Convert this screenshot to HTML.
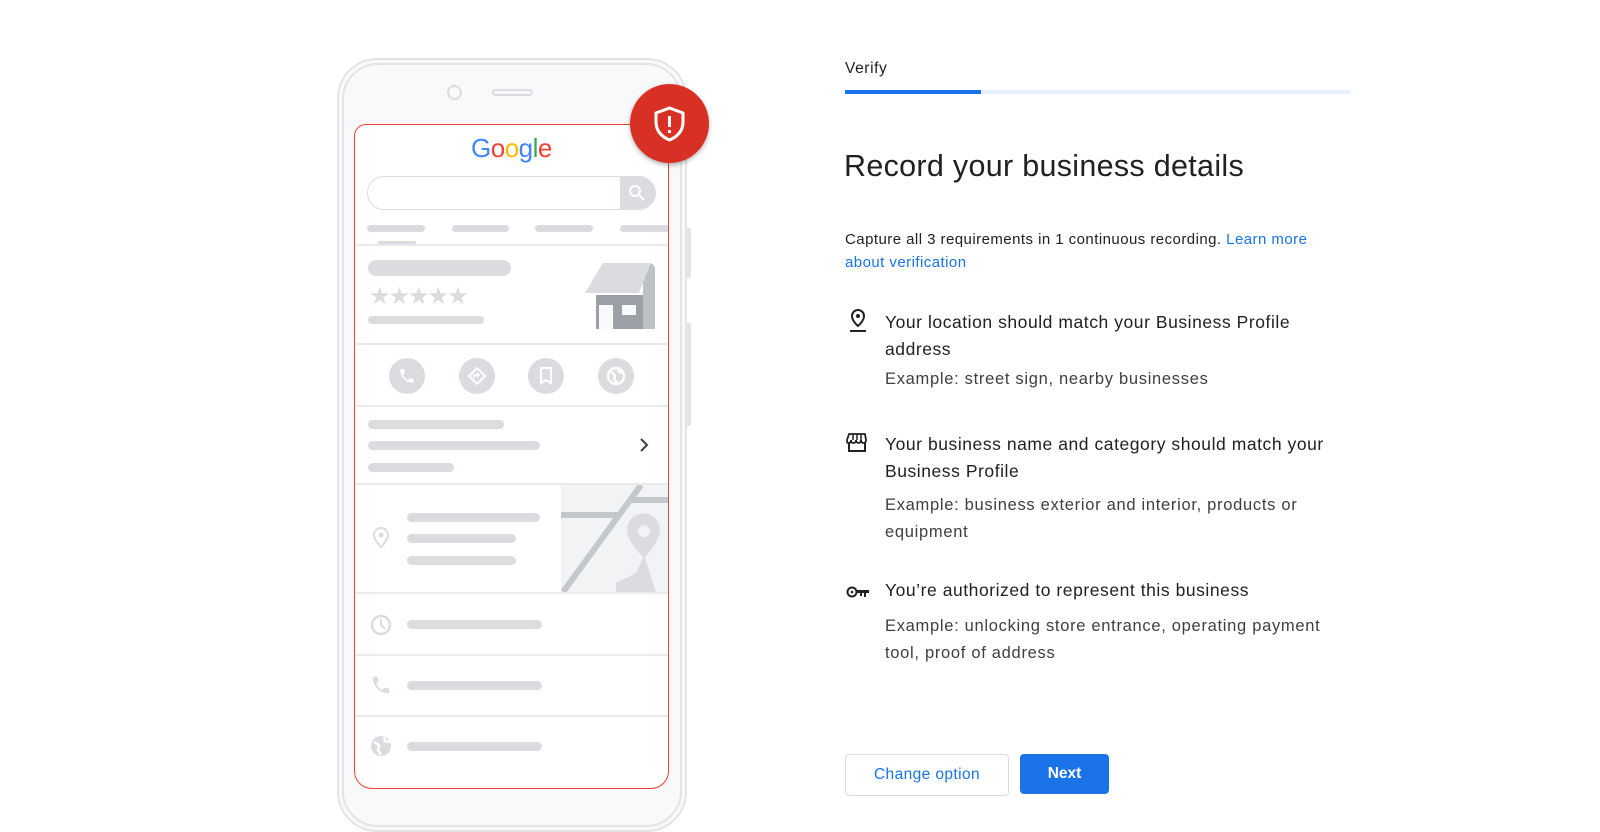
<!DOCTYPE html>
<html><head><meta charset="utf-8"><style>
body{margin:0;width:1600px;height:816px;background:#fff;font-family:"Liberation Sans",Roboto,sans-serif;position:relative;overflow:hidden;color:#202124}
.a{position:absolute}
.bar{position:absolute;background:#dadce0;border-radius:5px;height:9px}
.hr{position:absolute;left:356px;width:312px;height:2px;background:#e8eaed}
.t{position:absolute;font-size:17.5px;color:#202124;letter-spacing:.55px}
.s{position:absolute;font-size:16.5px;color:#3c4043;letter-spacing:.7px}
.ic{position:absolute;width:36px;height:36px;border-radius:50%;background:#dadce0}
</style></head><body>
<!-- phone -->
<div class="a" style="left:337px;top:58px;width:346px;height:770px;border:2px solid #e3e4e6;border-radius:40px;background:#f8f9fa"></div>
<div class="a" style="left:342px;top:63px;width:336px;height:760px;border:2px solid #e3e4e6;border-radius:36px;background:#f8f9fa"></div>
<div class="a" style="left:686px;top:228px;width:5px;height:50px;background:#e3e4e6;border-radius:2px"></div>
<div class="a" style="left:686px;top:323px;width:5px;height:103px;background:#e3e4e6;border-radius:2px"></div>
<div class="a" style="left:447px;top:85px;width:11px;height:11px;border:2px solid #dadce0;border-radius:50%"></div>
<div class="a" style="left:492px;top:89px;width:37px;height:3px;border:2px solid #dadce0;border-radius:4px"></div>
<div class="a" style="left:354px;top:124px;width:313px;height:663px;border:1.5px solid #ea4335;border-radius:12px 0 18px 18px;background:#fff;overflow:hidden">
</div>
<div class="a" style="left:471px;top:133px;font-size:26px;letter-spacing:-0.5px;font-family:'Liberation Sans',sans-serif"><span style="color:#4285f4">G</span><span style="color:#ea4335">o</span><span style="color:#fbbc05">o</span><span style="color:#4285f4">g</span><span style="color:#34a853">l</span><span style="color:#ea4335">e</span></div>
<div class="a" style="left:367px;top:176px;width:287px;height:32px;border:1.5px solid #dadce0;border-radius:18px;overflow:hidden"><div class="a" style="right:0;top:0;width:35px;height:32px;background:#dadce0"></div>
<svg class="a" style="right:9px;top:7px" width="18" height="18" viewBox="0 0 18 18"><circle cx="7" cy="7" r="5" fill="none" stroke="#fff" stroke-width="2"/><path d="M11 11l5 5" stroke="#fff" stroke-width="2"/></svg></div>
<div class="bar" style="left:367px;top:225px;width:58px;height:7px"></div>
<div class="bar" style="left:452px;top:225px;width:57px;height:7px"></div>
<div class="bar" style="left:535px;top:225px;width:58px;height:7px"></div>
<div class="bar" style="left:620px;top:225px;width:48px;height:7px;border-radius:5px 0 0 5px"></div>
<div class="bar" style="left:378px;top:241px;width:38px;height:3px"></div>
<div class="hr" style="top:244px"></div>
<div class="bar" style="left:368px;top:260px;width:143px;height:16px;border-radius:8px"></div>
<div class="a" style="left:369px;top:282px;font-size:24px;color:#dadce0;letter-spacing:-2px">★★★★★</div>
<div class="bar" style="left:368px;top:316px;width:116px;height:8px"></div>
<svg class="a" style="left:585px;top:263px" width="70" height="66" viewBox="0 0 70 66"><path d="M18 0h46a6 6 0 0 1 6 6v60H58V8z" fill="#bdc1c6"/><path d="M18 0h48l-12 30H0z" fill="#dadce0"/><rect x="11" y="32" width="47" height="34" fill="#9aa0a6"/><rect x="14" y="42" width="14" height="24" fill="#f8f9fa"/><rect x="37" y="42" width="14" height="10" fill="#f8f9fa"/></svg>
<div class="hr" style="top:343px"></div>
<div class="ic" style="left:389px;top:358px"></div><div class="ic" style="left:459px;top:358px"></div><div class="ic" style="left:528px;top:358px"></div><div class="ic" style="left:598px;top:358px"></div>
<svg class="a" style="left:398px;top:367px" width="18" height="18" viewBox="0 0 24 24"><path fill="#fff" d="M6.6 10.8c1.4 2.8 3.8 5.1 6.6 6.6l2.2-2.2c.3-.3.7-.4 1-.2 1.1.4 2.3.6 3.6.6.6 0 1 .4 1 1V20c0 .6-.4 1-1 1C10.6 21 3 13.4 3 4c0-.6.4-1 1-1h3.5c.6 0 1 .4 1 1 0 1.3.2 2.5.6 3.6.1.3 0 .7-.2 1z"/></svg>
<svg class="a" style="left:467px;top:366px" width="20" height="20" viewBox="0 0 20 20"><path d="M10 2l8 8-8 8-8-8z" fill="none" stroke="#fff" stroke-width="2"/><path d="M7 12V9h5M10 7l2 2-2 2" fill="none" stroke="#fff" stroke-width="1.6"/></svg>
<svg class="a" style="left:539px;top:367px" width="14" height="18" viewBox="0 0 14 18"><path d="M2 1h10v15l-5-3-5 3z" fill="none" stroke="#fff" stroke-width="2"/></svg>
<svg class="a" style="left:606px;top:366px" width="20" height="20" viewBox="0 0 20 20"><circle cx="10" cy="10" r="8" fill="none" stroke="#fff" stroke-width="2.5"/><path d="M5 6l4 3-1 4 3 4M12 3l1 3 4 1" fill="none" stroke="#fff" stroke-width="2.5"/></svg>
<div class="hr" style="top:405px"></div>
<div class="bar" style="left:368px;top:420px;width:136px"></div>
<div class="bar" style="left:368px;top:441px;width:172px"></div>
<div class="bar" style="left:368px;top:463px;width:86px"></div>
<svg class="a" style="left:638px;top:437px" width="12" height="16" viewBox="0 0 12 16"><path d="M3 2l6 6-6 6" fill="none" stroke="#3c4043" stroke-width="2"/></svg>
<div class="hr" style="top:483px"></div>
<div class="a" style="left:561px;top:485px;width:107px;height:107px;background:#f1f3f4;overflow:hidden">
<svg width="107" height="107" viewBox="0 0 107 107"><path d="M0 30h60M70 15h40" stroke="#c4c7cb" stroke-width="6"/><path d="M80 0L2 107" stroke="#c4c7cb" stroke-width="6"/><path d="M66 45a16 16 0 0 1 33 0c0 12-16 28-16 28s-17-16-17-28z" fill="#dadce0"/><circle cx="83" cy="46" r="6" fill="#f1f3f4"/><path d="M83 70l-8 18-20 10 0 9h40z" fill="#dadce0"/></svg></div>
<svg class="a" style="left:372px;top:527px" width="18" height="22" viewBox="0 0 18 22"><path d="M9 20s-7-7-7-12a7 7 0 0 1 14 0c0 5-7 12-7 12z" fill="none" stroke="#dadce0" stroke-width="2"/><circle cx="9" cy="8" r="2.5" fill="#dadce0"/></svg>
<div class="bar" style="left:407px;top:513px;width:133px"></div>
<div class="bar" style="left:407px;top:534px;width:109px"></div>
<div class="bar" style="left:407px;top:556px;width:109px"></div>
<div class="hr" style="top:592px"></div>
<svg class="a" style="left:370px;top:614px" width="22" height="22" viewBox="0 0 22 22"><circle cx="11" cy="11" r="9" fill="none" stroke="#dadce0" stroke-width="2.5"/><path d="M11 5v6l4 4" fill="none" stroke="#dadce0" stroke-width="2"/></svg>
<div class="bar" style="left:407px;top:620px;width:135px"></div>
<div class="hr" style="top:654px"></div>
<svg class="a" style="left:370px;top:674px" width="22" height="22" viewBox="0 0 24 24"><path fill="#dadce0" d="M6.6 10.8c1.4 2.8 3.8 5.1 6.6 6.6l2.2-2.2c.3-.3.7-.4 1-.2 1.1.4 2.3.6 3.6.6.6 0 1 .4 1 1V20c0 .6-.4 1-1 1C10.6 21 3 13.4 3 4c0-.6.4-1 1-1h3.5c.6 0 1 .4 1 1 0 1.3.2 2.5.6 3.6.1.3 0 .7-.2 1z"/></svg>
<div class="bar" style="left:407px;top:681px;width:135px"></div>
<div class="hr" style="top:715px"></div>
<svg class="a" style="left:370px;top:735px" width="22" height="22" viewBox="0 0 22 22"><circle cx="11" cy="11" r="10" fill="#dadce0"/><path d="M4 7l5 3-1 5 3 5M14 2l1 4 5 1" fill="none" stroke="#fff" stroke-width="2.5"/></svg>
<div class="bar" style="left:407px;top:742px;width:135px"></div>
<!-- badge -->
<div class="a" style="left:630px;top:84px;width:79px;height:79px;border-radius:50%;background:#d93025;box-shadow:0 2px 5px rgba(0,0,0,.3)"></div>
<svg class="a" style="left:653px;top:106px" width="33" height="36" viewBox="0 0 33 36"><path d="M16.5 2L3 7v9c0 9 6 15 13.5 18C24 31 30 25 30 16V7z" fill="none" stroke="#fff" stroke-width="3"/><rect x="15" y="10" width="3" height="11" fill="#fff"/><rect x="15" y="24" width="3" height="3" fill="#fff"/></svg>
<!-- right -->
<div class="a" style="left:845px;top:60px;font-size:15.5px;letter-spacing:.6px">Verify</div>
<div class="a" style="left:845px;top:90px;width:506px;height:4px;background:#e8f0fe"></div>
<div class="a" style="left:845px;top:90px;width:136px;height:4px;background:#1a73e8"></div>
<div class="a" style="left:844px;top:149px;font-size:30.5px;letter-spacing:.3px">Record your business details</div>
<div class="a" style="left:845px;top:228px;font-size:15px;line-height:23px;width:480px;letter-spacing:.45px;color:#202124">Capture all 3 requirements in 1 continuous recording. <span style="color:#1a73e8">Learn more about verification</span></div>
<svg class="a" style="left:847px;top:309px" width="22" height="24" viewBox="0 0 22 24"><path d="M11 17s-6-5-6-10a6 6 0 0 1 12 0c0 5-6 10-6 10z" fill="none" stroke="#202124" stroke-width="2"/><circle cx="11" cy="7" r="2" fill="#202124"/><rect x="3" y="21" width="16" height="2" fill="#202124"/></svg>
<div class="t" style="left:885px;top:309px;line-height:27px;width:445px">Your location should match your Business Profile address</div>
<div class="s" style="left:885px;top:370px">Example: street sign, nearby businesses</div>
<svg class="a" style="left:846px;top:432px" width="22" height="22" viewBox="0 0 22 22"><path d="M3 2h16l1 6c0 2-1 3-2.5 3S15 10 15 8c0 2-1.5 3-2.5 3S10 10 10 8c0 2-1 3-2.5 3S5 10 5 8c0 2-1 3-2.5 3S1 10 1 8z" fill="none" stroke="#202124" stroke-width="1.8"/><path d="M3 11v8h16v-8" fill="none" stroke="#202124" stroke-width="2"/><path d="M7 2v6M11 2v6M15 2v6" stroke="#202124" stroke-width="1.5"/></svg>
<div class="t" style="left:885px;top:431px;line-height:27px;width:470px">Your business name and category should match your Business Profile</div>
<div class="s" style="left:885px;top:492px;line-height:27px;width:440px">Example: business exterior and interior, products or equipment</div>
<svg class="a" style="left:846px;top:584px" width="24" height="16" viewBox="0 0 24 16"><circle cx="6" cy="8" r="4.5" fill="none" stroke="#202124" stroke-width="2"/><circle cx="6" cy="8" r="1.3" fill="#202124"/><path d="M10 6h13v3h-3v4h-2V9h-2v3h-2V9h-4z" fill="#202124"/></svg>
<div class="t" style="left:885px;top:580px">You’re authorized to represent this business</div>
<div class="s" style="left:885px;top:613px;line-height:27px;width:455px">Example: unlocking store entrance, operating payment tool, proof of address</div>
<div class="a" style="left:845px;top:754px;width:162px;height:40px;border:1px solid #dadce0;border-radius:4px;color:#1a73e8;font-size:15.5px;text-align:center;line-height:40px;letter-spacing:.4px">Change option</div>
<div class="a" style="left:1020px;top:754px;width:89px;height:40px;background:#1a73e8;border-radius:4px;color:#fff;font-size:15.5px;text-align:center;line-height:40px;font-weight:bold">Next</div>
</body></html>
